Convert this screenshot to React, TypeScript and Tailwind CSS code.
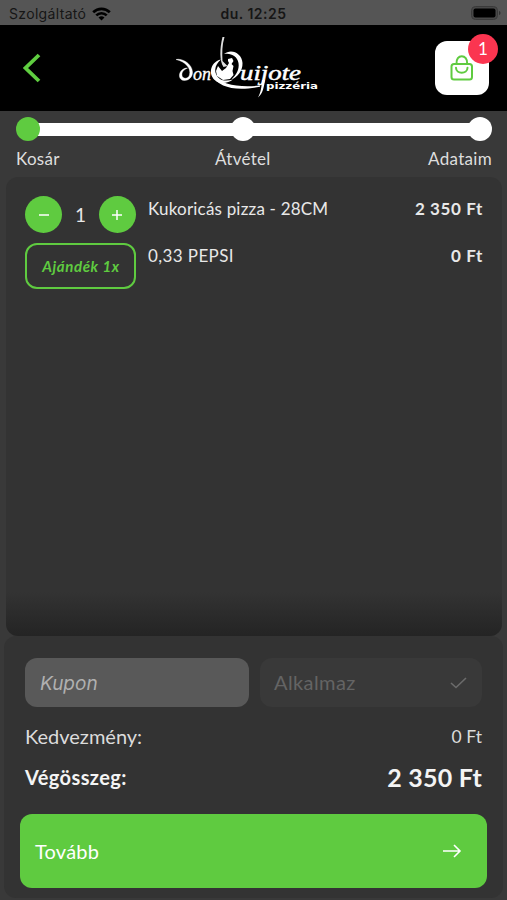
import type { ReactNode } from 'react';

interface Step {
  label: string;
  active: boolean;
}

const STEPS: Step[] = [
  { label: 'Kosár', active: true },
  { label: 'Átvétel', active: false },
  { label: 'Adataim', active: false },
];

function StatusBar() {
  return (
    <div className="flex h-[25px] items-center justify-between bg-[#555555] pt-[3px] pr-[6px] pl-[9px] font-['Inter',sans-serif] text-sm leading-5 text-[#161616]">
      <div className="flex w-[160px] items-center gap-[6px]">
        <span className="tracking-[0.33px]">Szolgáltató</span>
        <svg width="19" height="14" viewBox="0 0 19 14" fill="none" stroke="#000" strokeWidth="2.7" className="-mt-px">
          <path d="M1.2 5.2a11.8 11.8 0 0 1 16.6 0" />
          <path d="M4.3 8.4a7.4 7.4 0 0 1 10.4 0" />
          <path d="M9.5 13.6 6.5 10.6a4.3 4.3 0 0 1 6 0Z" fill="#000" stroke="none" />
        </svg>
      </div>
      <span className="text-center font-semibold tracking-[0.5px] whitespace-nowrap">du. 12:25</span>
      <div className="-mt-[3px] flex w-[163px] justify-end">
        <svg width="30" height="14" viewBox="0 0 30 14">
          <rect x="0.5" y="0.5" width="26" height="13" rx="4" fill="#484848" stroke="#3a3a3a" />
          <rect x="2.5" y="2.5" width="22" height="9" rx="2" fill="#000" />
          <path d="M28 5v4c2-.6 2-3.4 0-4Z" fill="#333" />
        </svg>
      </div>
    </div>
  );
}

function Logo() {
  return (
    <svg width="146" height="66" viewBox="0 0 146 66" fill="#fff" className="block">
      {/* "d" with its long swash */}
      <path d="M1 25.5c6-1.5 16 4 16.5 12.5.3 5-4 8.5-8 8.5-6 0-6.5-7-2.5-10.5 2-1.7 4-2 5.5-2-4 2-6 4-5.5 7.500.5 3.500 6 4 7.500-.5C16.500 34 10 27.500 1 25.500Z" stroke="#fff" strokeWidth=".4" />
      <text x="18" y="46" fontFamily="Liberation Serif, serif" fontStyle="italic" fontSize="19" textLength="18" lengthAdjust="spacingAndGlyphs" stroke="#fff" strokeWidth=".3">on</text>
      {/* "Q": left bowl, lance, right crescent and rider */}
      <path d="M46 25.500C34 28 32 44 44 48.500c5 1.500 10 0 14-3-5 1.500-10 1.500-13-.5-7-5-6-14 1-19.500Z" />
      <path d="M47.500 3h2c-2.500 8-2.500 16-2 24l5 5-4 1c-4-6-4-18-1-30Z" fill="#dedede" />
      <path d="M49 20c7-6 18-1 18.500 9 .3 8-5 14-11 16.500 5-5 8-10 7-16.500-1-7-8-10.500-14.500-9Z" />
      <path d="M53 25l4-1 1.500 3-2 3 2 2-1 5 1 4-3.500 4-7 1-6-4-1-5 2-5 4 5 4-3 3-5-1-2Z" />
      <path d="M37 42c10 8 26 12 48 9.500v1.200C60 58 44 53 37 42Z" />
      <text x="65" y="45.500" fontFamily="Liberation Serif, serif" fontStyle="italic" fontSize="22" textLength="61" lengthAdjust="spacingAndGlyphs" stroke="#fff" strokeWidth=".5">uijote</text>
      <path d="M87 46c-.5 7-1 12-4 17.500 5-4 6-11 7-17.500Z" />
      <text x="91" y="55" fontFamily="DejaVu Sans, sans-serif" fontWeight="700" fontSize="8" textLength="52" lengthAdjust="spacingAndGlyphs">pizzéria</text>
    </svg>
  );
}

function Header() {
  return (
    <header className="flex h-[86px] items-center justify-between bg-black pr-[18px] pl-[23px]">
      <button type="button" aria-label="Vissza" className="w-[54px]">
        <svg width="18" height="30" viewBox="0 0 18 30" fill="none" stroke="#5fcd40" strokeWidth="3.8">
          <path d="M16 2 2.5 15 16 28" />
        </svg>
      </button>
      <div className="-mt-[2px] mr-[17px]">
        <Logo />
      </div>
      <button type="button" className="relative flex size-[54px] items-center justify-center rounded-[12px] bg-white">
        <svg width="24" height="28" viewBox="0 0 24 28" fill="none" stroke="#5fcb40" strokeWidth="2" strokeLinecap="round">
          <rect x="1.5" y="10" width="20.5" height="15.5" rx="2.5" />
          <path d="M6.5 10C5.5-.5 18-.5 17.2 10" />
          <path d="M6 13.8c0 6.5 11.5 6.5 11.5 0" />
        </svg>
        <span className="absolute -top-[7px] -right-[9px] flex size-[30px] items-center justify-center rounded-full bg-[#fb3550] text-[17px] text-white">
          1
        </span>
      </button>
    </header>
  );
}

function Stepper() {
  return (
    <div className="h-[66px] pt-[6px] pr-[15px] pl-4">
      <div className="grid grid-cols-[215px_1fr_24px] bg-[linear-gradient(#fff,#fff)] bg-[length:calc(100%-12px)_13px] bg-center bg-no-repeat">
        {STEPS.map((step) => (
          <span
            key={step.label}
            className={`size-6 rounded-full ${step.active ? 'bg-[#5fcb40]' : 'bg-white'}`}
          />
        ))}
      </div>
      <div className="mt-[8px] grid grid-cols-[199px_1fr_auto] text-[17px] leading-5 tracking-[0.3px] text-[#dedede]">
        {STEPS.map((step) => (
          <span key={step.label}>{step.label}</span>
        ))}
      </div>
    </div>
  );
}

function RoundButton({ label, children }: { label: string; children: ReactNode }) {
  return (
    <button
      type="button"
      aria-label={label}
      className="flex size-[37px] items-center justify-center rounded-full bg-[#5fcb40]"
    >
      <svg width="12" height="12" viewBox="0 0 12 12" stroke="#fff" strokeWidth="1.5">
        {children}
      </svg>
    </button>
  );
}

function CartItems() {
  return (
    <section className="mr-[5px] ml-[6px] flex h-[459px] flex-col justify-between overflow-hidden rounded-xl bg-[#333333] text-[17px] leading-[26px] tracking-[0.2px] text-[#e8e8e8]">
      <div className="flex flex-col gap-[10px] pt-[19px] pr-[19px] pl-[19px]">
        <div className="flex">
          <div className="flex w-[111px] items-center justify-between">
            <RoundButton label="Kevesebb">
              <path d="M1 6h10" />
            </RoundButton>
            <span className="text-[19px]">1</span>
            <RoundButton label="Több">
              <path d="M1 6h10M6 1v10" />
            </RoundButton>
          </div>
          <span className="ml-3 flex-1">Kukoricás pizza - 28CM</span>
          <span className="font-bold tracking-[0.6px]">2 350 Ft</span>
        </div>
        <div className="flex">
          <div className="flex h-[46px] w-[111px] items-center justify-center rounded-[12px] border-[2.5px] border-[#5fcb40] pl-px text-[15px] font-bold tracking-[0.6px] text-[#5fcb40] italic">
            Ajándék 1x
          </div>
          <span className="ml-3 flex-1 tracking-[0.4px]">0,33 PEPSI</span>
          <span className="font-bold tracking-[0.6px]">0 Ft</span>
        </div>
      </div>
      <div className="h-11 bg-gradient-to-b from-[#333333] to-[#242424]" />
    </section>
  );
}

function Summary() {
  return (
    <section className="mx-[4px] h-[262px] rounded-xl bg-[#333333] pt-[22px] text-[#dcdcdc]">
      <div className="flex gap-[11px] px-[21px]">
        <input
          placeholder="Kupon"
          className="h-[49px] w-[224px] rounded-[12px] bg-[#595959] px-[15px] pt-[2px] font-['Inter',sans-serif] text-[19px] italic placeholder:text-[#b0b0b0]"
        />
        <button
          type="button"
          disabled
          className="flex h-[49px] flex-1 items-center justify-between rounded-[12px] bg-[#393939] px-[15px] text-[20px] tracking-[0.4px] text-[#646464]"
        >
          <span className="-mt-px -ml-px">Alkalmaz</span>
          <svg width="17" height="12" viewBox="0 0 17 12" fill="none" stroke="#6b6b6b" strokeWidth="1.6">
            <path d="m1 6 5 4.5L16 1" />
          </svg>
        </button>
      </div>
      <div className="mt-[14px] flex items-center justify-between px-[21px] leading-7">
        <span className="text-[20px]">Kedvezmény:</span>
        <span className="pt-[2px] text-[17.5px]">0 Ft</span>
      </div>
      <div className="mt-[10px] flex items-center justify-between px-[21px] leading-8 font-bold text-[#f4f4f4]">
        <span className="text-[20px] tracking-[0.4px]">Végösszeg:</span>
        <span className="text-[25px] tracking-[0.2px]">2 350 Ft</span>
      </div>
      <button
        type="button"
        className="mt-[21px] ml-[16px] flex h-[74px] w-[467px] items-center justify-between rounded-[12px] bg-[#5fcb40] pr-[25px] pl-[15px] text-[20px] tracking-[0.2px] text-white"
      >
        <span>Tovább</span>
        <svg width="19" height="14" viewBox="0 0 19 14" fill="none" stroke="#fff" strokeWidth="1.6">
          <path d="M0 7h17M11 1l6 6-6 6" />
        </svg>
      </button>
    </section>
  );
}

export default function App() {
  return (
    <div className="h-[900px] w-[507px] overflow-hidden bg-[#393939] font-['Lato',sans-serif]">
      <StatusBar />
      <Header />
      <Stepper />
      <CartItems />
      <Summary />
    </div>
  );
}
